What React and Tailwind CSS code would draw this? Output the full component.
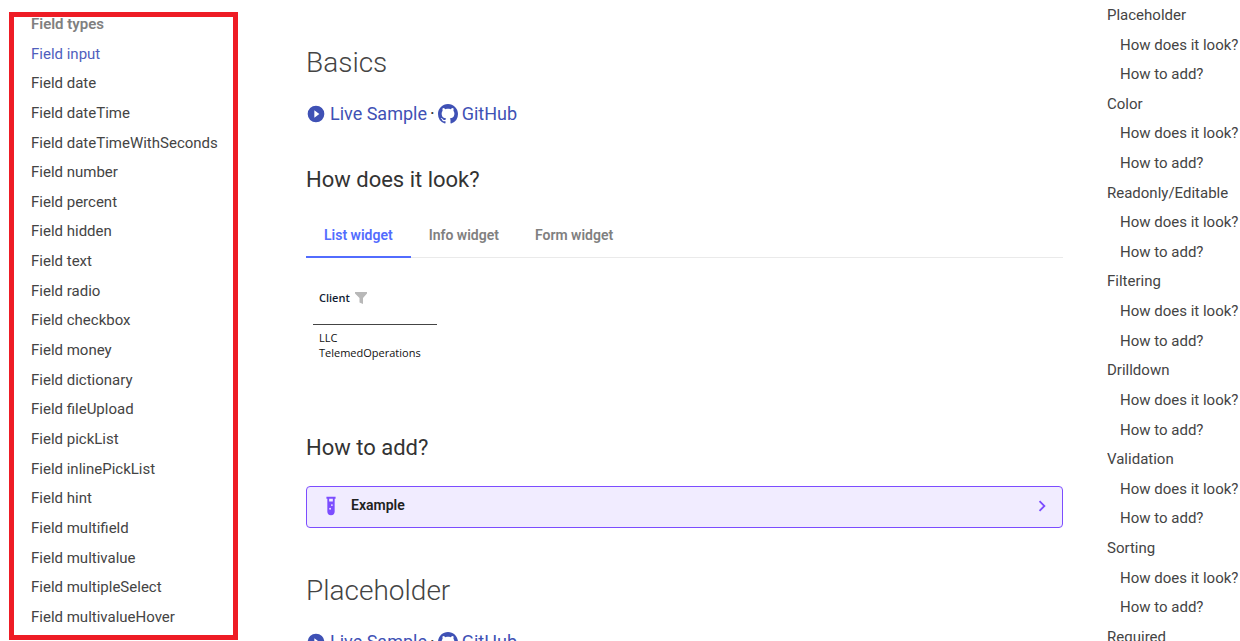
import React from "react";

const fieldTypes = [
  "Field input", "Field date", "Field dateTime", "Field dateTimeWithSeconds", "Field number",
  "Field percent", "Field hidden", "Field text", "Field radio", "Field checkbox", "Field money",
  "Field dictionary", "Field fileUpload", "Field pickList", "Field inlinePickList", "Field hint",
  "Field multifield", "Field multivalue", "Field multipleSelect", "Field multivalueHover",
];

const sections = [
  "Placeholder", "Color", "Readonly/Editable", "Filtering", "Drilldown", "Validation", "Sorting",
];

const tocEntries = [
  ...sections.flatMap((title) => [
    { text: title, nested: false },
    { text: "How does it look?", nested: true },
    { text: "How to add?", nested: true },
  ]),
  { text: "Required", nested: false },
];

function PlayIcon() {
  return (
    <svg viewBox="0 0 24 24" className="size-5 shrink-0 fill-current" aria-hidden="true">
      <path d="M10 16.5v-9l6 4.5M12 2A10 10 0 0 0 2 12a10 10 0 0 0 10 10 10 10 0 0 0 10-10A10 10 0 0 0 12 2Z" />
    </svg>
  );
}

function GitHubIcon() {
  return (
    <svg viewBox="0 0 16 16" className="size-5 shrink-0 fill-current" aria-hidden="true">
      <path d="M8 0c4.42 0 8 3.58 8 8a8.013 8.013 0 0 1-5.45 7.59c-.4.08-.55-.17-.55-.38 0-.27.01-1.13.01-2.2 0-.75-.25-1.23-.54-1.48 1.78-.2 3.65-.88 3.65-3.95 0-.88-.31-1.59-.82-2.15.08-.2.36-1.02-.08-2.12 0 0-.67-.22-2.2.82-.64-.18-1.32-.27-2-.27-.68 0-1.36.09-2 .27-1.53-1.03-2.2-.82-2.2-.82-.44 1.1-.16 1.92-.08 2.12-.51.56-.82 1.28-.82 2.15 0 3.06 1.86 3.75 3.64 3.95-.23.2-.44.55-.51 1.07-.46.21-1.61.55-2.33-.66-.15-.24-.6-.83-1.23-.82-.67.01-.27.38.01.53.34.19.73.9.82 1.13.16.45.68 1.31 2.69.94 0 .67.01 1.3.01 1.49 0 .21-.15.45-.55.38A7.995 7.995 0 0 1 0 8c0-4.42 3.58-8 8-8Z" />
    </svg>
  );
}

function SampleLinks() {
  return (
    <p className="flex items-center gap-[3px] text-lg leading-6 text-[#3f51b5]">
      <a href="#live" className="flex items-center gap-1"><PlayIcon />Live Sample</a>
      <span className="text-[#333]">·</span>
      <a href="#github" className="flex items-center gap-1"><GitHubIcon />GitHub</a>
    </p>
  );
}

function SectionTitle({ children }) {
  return <h1 className="text-[28px] leading-9 font-light text-[#444]">{children}</h1>;
}

function Subtitle({ children }) {
  return <h2 className="text-[22px] leading-8 font-normal text-[#333]">{children}</h2>;
}

function Tabs() {
  return (
    <div role="tablist" className="flex border-b border-[#eaeaea] text-sm leading-5 font-semibold text-[#808080]">
      <button role="tab" aria-selected="true" className="-mb-px border-b-2 border-[#526cfe] px-[18px] pt-[9px] pb-[11px] text-[#526cfe]">List widget</button>
      <button role="tab" aria-selected="false" className="-mb-px border-b-2 border-transparent px-[18px] pt-[9px] pb-[11px]">Info widget</button>
      <button role="tab" aria-selected="false" className="-mb-px border-b-2 border-transparent px-[18px] pt-[9px] pb-[11px]">Form widget</button>
    </div>
  );
}

function ClientTable() {
  return (
    <table className="mt-8 ml-[7px] w-[124px] border-collapse text-left font-['Open_Sans',sans-serif] text-[11px] leading-[15px]">
      <thead>
        <tr className="border-b border-[#444]">
          <th className="pb-[19px] pl-[6px] font-semibold text-[#111c33]">
            <span className="flex items-center gap-[5px]">
              Client
              <svg viewBox="0 0 12 12" className="size-3 fill-[#b8b8b8]" aria-hidden="true">
                <path d="M0 0h12v1.5L8 6v6L4.500 10.500V6L0 1.500Z" />
              </svg>
            </span>
          </th>
        </tr>
      </thead>
      <tbody>
        <tr>
          <td className="pt-[5px] pl-[6px] text-[#111]">LLC<br />TelemedOperations</td>
        </tr>
      </tbody>
    </table>
  );
}

function Example() {
  return (
    <details className="rounded border border-[#7c4dff] bg-[#f1ecff]">
      <summary className="flex h-10 cursor-pointer list-none items-center pr-[9px] pb-[2px] pl-[13px]">
        <svg viewBox="0 0 24 24" className="size-[22px] fill-[#7c4dff]" aria-hidden="true">
          <path d="M7 2v2h1v14a4 4 0 0 0 4 4 4 4 0 0 0 4-4V4h1V2H7m4 14c-.6 0-1-.4-1-1s.4-1 1-1 1 .4 1 1-.4 1-1 1m2-4c-.6 0-1-.4-1-1s.4-1 1-1 1 .4 1 1-.4 1-1 1m1-5h-4V4h4v3Z" />
        </svg>
        <span className="ml-[9px] flex-1 pb-[2px] text-sm leading-5 font-semibold text-[#212121]">Example</span>
        <svg viewBox="0 0 24 24" className="size-[22px] fill-[#7c4dff]" aria-hidden="true">
          <path d="M8.590 16.580 13.170 12 8.590 7.410 10 6l6 6-6 6-1.410-1.420Z" />
        </svg>
      </summary>
      <p className="px-4 pb-3 text-sm">Example</p>
    </details>
  );
}

export default function App() {
  return (
    <div className="flex h-screen overflow-hidden bg-white font-[Roboto,sans-serif] text-[#444]">
      <nav aria-label="Field types" className="mt-3 mb-px ml-[9px] flex w-[229px] shrink-0 flex-col border-5 border-[#ee1c25] pr-2 pb-[11px] pl-[17px] text-[15px] leading-[14px]">
        <ul className="flex flex-1 flex-col justify-between">
          <li className="font-semibold text-[#808080]">Field types</li>
          {fieldTypes.map((name, i) => (
            <li key={name}>
              <a href="#field" className={i === 0 ? "text-[#4f5fbd]" : "text-[#444]"}>{name}</a>
            </li>
          ))}
        </ul>
      </nav>

      <main className="ml-[68px] min-w-0 flex-1 pt-[45px]">
        <SectionTitle>Basics</SectionTitle>
        <div className="mt-[21px]"><SampleLinks /></div>
        <div className="mt-[38px]"><Subtitle>How does it look?</Subtitle></div>
        <div className="mt-5"><Tabs /></div>
        <ClientTable />
        <div className="mt-[72px]"><Subtitle>How to add?</Subtitle></div>
        <div className="mt-[22px]"><Example /></div>
        <div className="mt-[45px]"><SectionTitle>Placeholder</SectionTitle></div>
        <div className="mt-[21px]"><SampleLinks /></div>
      </main>

      <nav aria-label="Table of contents" className="ml-11 flex w-[133px] shrink-0 flex-col overflow-hidden pt-[7px] text-[15px] leading-4">
        <ul className="-mb-1 flex flex-1 flex-col justify-between whitespace-nowrap">
          {tocEntries.map((entry, i) => (
            <li key={i} className={entry.nested ? "pl-[13px]" : ""}>
              <a href="#section">{entry.text}</a>
            </li>
          ))}
        </ul>
      </nav>
    </div>
  );
}
